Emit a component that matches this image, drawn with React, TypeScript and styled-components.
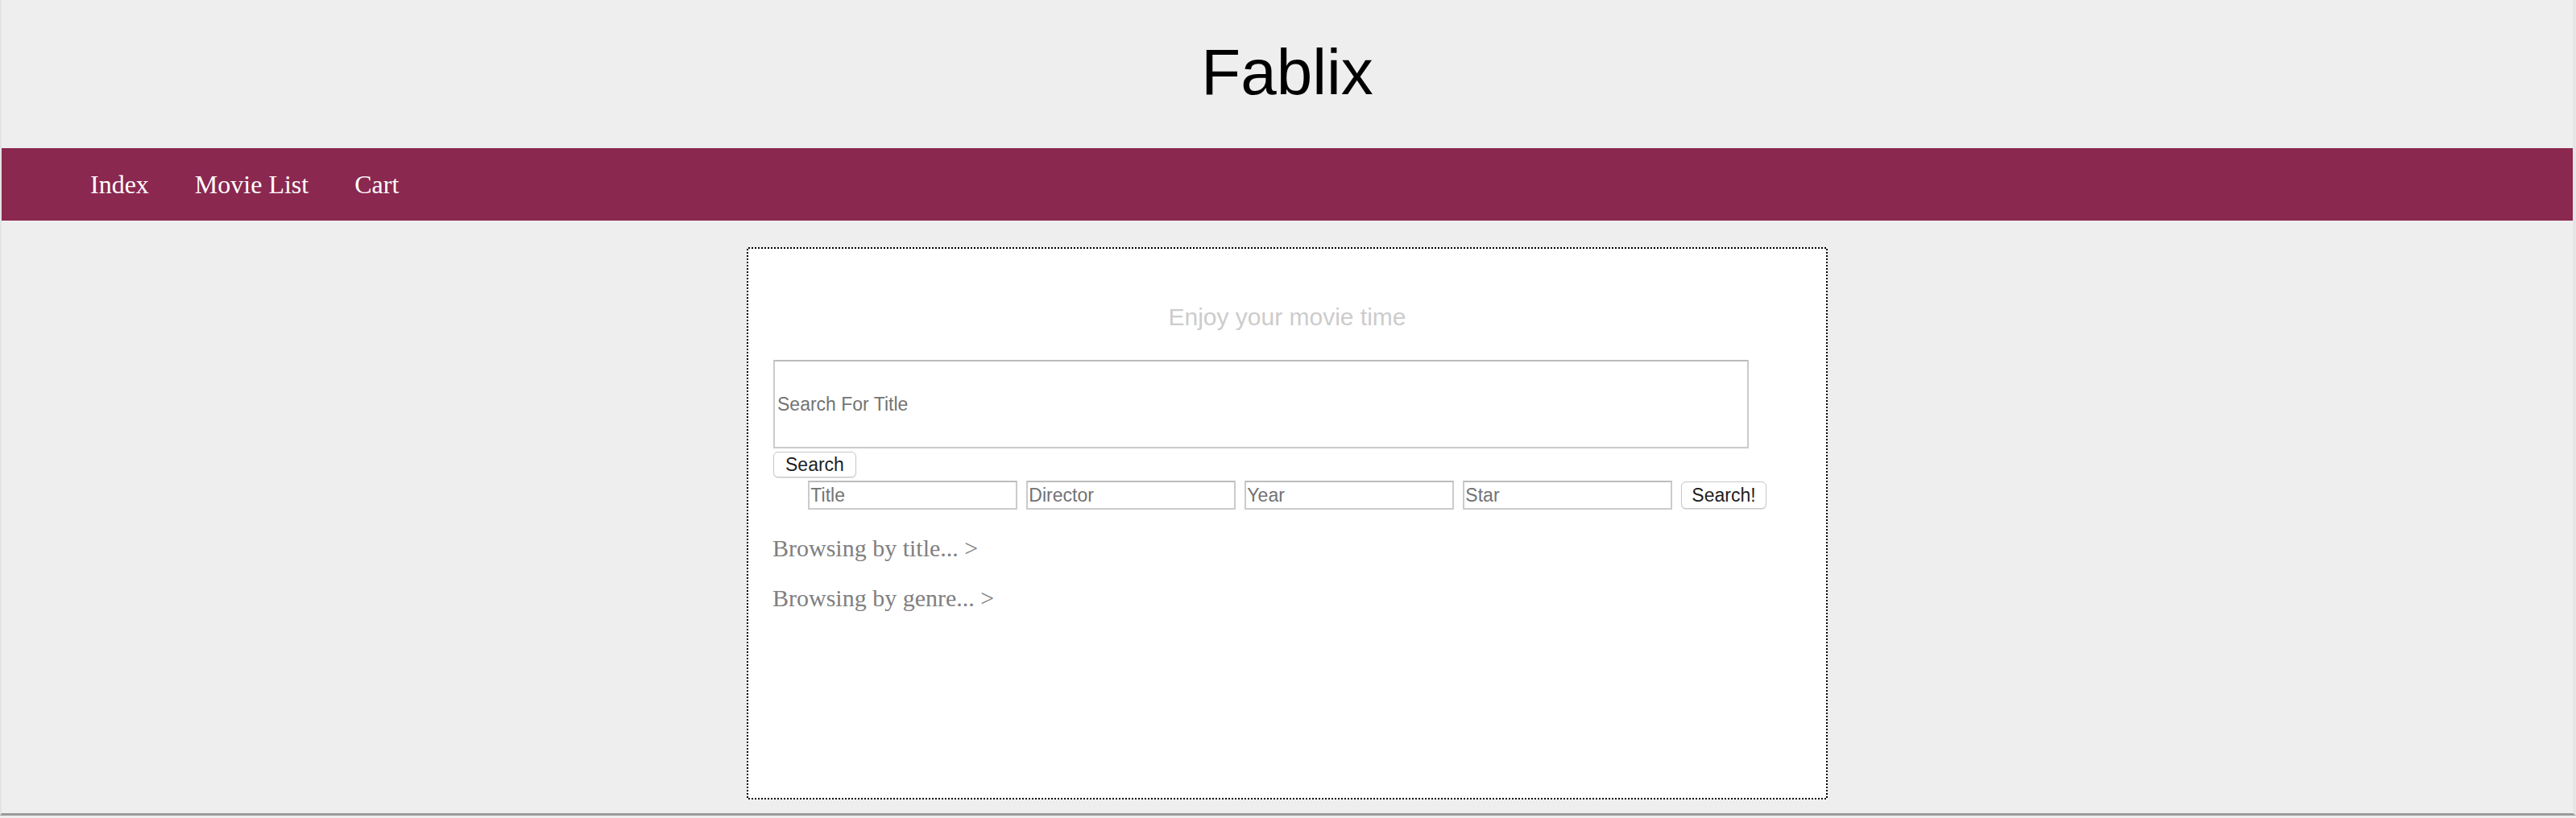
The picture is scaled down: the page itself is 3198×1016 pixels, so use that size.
import styled, { createGlobalStyle } from 'styled-components';

const GlobalStyle = createGlobalStyle`
  html, body {
    margin: 0;
    padding: 0;
    background-color: #eeeeee;
  }
`;

const Frame = styled.div`
  border-left: 2px solid #e4e4e4;
  border-right: 4px solid #e5e5e5;
  border-bottom: 3px solid #9a9a9a;
  padding-bottom: 17px;
`;

const Header = styled.header`
  height: 184px;
  box-sizing: border-box;
  padding-top: 44px;
  text-align: center;
`;

const Brand = styled.h1`
  margin: 0;
  font-family: "Liberation Sans", Arial, sans-serif;
  font-size: 80px;
  font-weight: normal;
  line-height: 92px;
  color: #000;
`;

const NavBar = styled.nav`
  height: 90px;
  display: flex;
  align-items: center;
  gap: 57px;
  padding-left: 110px;
  background-color: #8b2850;
`;

const NavLink = styled.a`
  font-family: "Liberation Serif", "Times New Roman", serif;
  font-size: 32px;
  color: #fff;
  text-decoration: none;
`;

// square 2px dots, like a 1px dotted border on a retina screen
const Panel = styled.main`
  width: 1342px;
  height: 686px;
  box-sizing: border-box;
  margin: 33px auto 0;
  padding: 30px;
  border: 2px solid transparent;
  background:
    linear-gradient(#fff, #fff) padding-box,
    repeating-conic-gradient(#000 0 25%, #fff 0 50%) 0 0 / 4px 4px border-box;
`;

const Tagline = styled.h3`
  margin: 38px 0 0;
  font-family: "Liberation Sans", Arial, sans-serif;
  font-size: 30px;
  font-weight: normal;
  line-height: 34px;
  color: #cccccc;
  text-align: center;
`;

const TextInput = styled.input<{ $big?: boolean }>`
  display: block;
  box-sizing: border-box;
  width: ${p => (p.$big ? '1211px' : '260px')};
  height: ${p => (p.$big ? '110px' : '36px')};
  margin: ${p => (p.$big ? '36px 0 0 1px' : '0')};
  padding: 0 ${p => (p.$big ? '3px' : '1px')};
  border: 2px solid #cbcbcb;
  border-top-color: #bcbcbc;
  background: #fff;
  font-family: "Liberation Sans", Arial, sans-serif;
  font-size: 23px;
  color: #000;
  outline: none;

  &::placeholder {
    color: #737373;
  }
`;

const Button = styled.button<{ $tall?: boolean }>`
  display: block;
  box-sizing: border-box;
  height: ${p => (p.$tall ? '34px' : '32px')};
  margin: ${p => (p.$tall ? '0' : '4px 0 0 1px')};
  padding: 0 ${p => (p.$tall ? '12px' : '14px')};
  border: 1px solid #c8c8c8;
  border-radius: 6px;
  background: #fff;
  box-shadow: 0 1px 1px rgba(0, 0, 0, 0.12);
  font-family: "Liberation Sans", Arial, sans-serif;
  font-size: 23px;
  color: #1e1e1e;
`;

const FilterRow = styled.form`
  display: flex;
  justify-content: center;
  align-items: center;
  gap: 11px;
  margin-top: 4px;
`;

const BrowseList = styled.div`
  margin-top: 17px;
`;

const BrowseLink = styled.a`
  display: block;
  font-family: "Liberation Serif", "Times New Roman", serif;
  font-size: 30px;
  line-height: 62px;
  color: #808080;
  text-decoration: none;
`;

const App = () => {
  return (
    <>
      <GlobalStyle />
      <Frame>
        <Header>
          <Brand>Fablix</Brand>
        </Header>
        <NavBar>
          <NavLink href="#">Index</NavLink>
          <NavLink href="#">Movie List</NavLink>
          <NavLink href="#">Cart</NavLink>
        </NavBar>
        <Panel>
          <Tagline>Enjoy your movie time</Tagline>
          <TextInput $big placeholder="Search For Title" />
          <Button>Search</Button>
          <FilterRow onSubmit={e => e.preventDefault()}>
            <TextInput placeholder="Title" />
            <TextInput placeholder="Director" />
            <TextInput placeholder="Year" />
            <TextInput placeholder="Star" />
            <Button $tall type="submit">Search!</Button>
          </FilterRow>
          <BrowseList>
            <BrowseLink href="#">Browsing by title... &gt;</BrowseLink>
            <BrowseLink href="#">Browsing by genre... &gt;</BrowseLink>
          </BrowseList>
        </Panel>
      </Frame>
    </>
  );
};

export default App;
